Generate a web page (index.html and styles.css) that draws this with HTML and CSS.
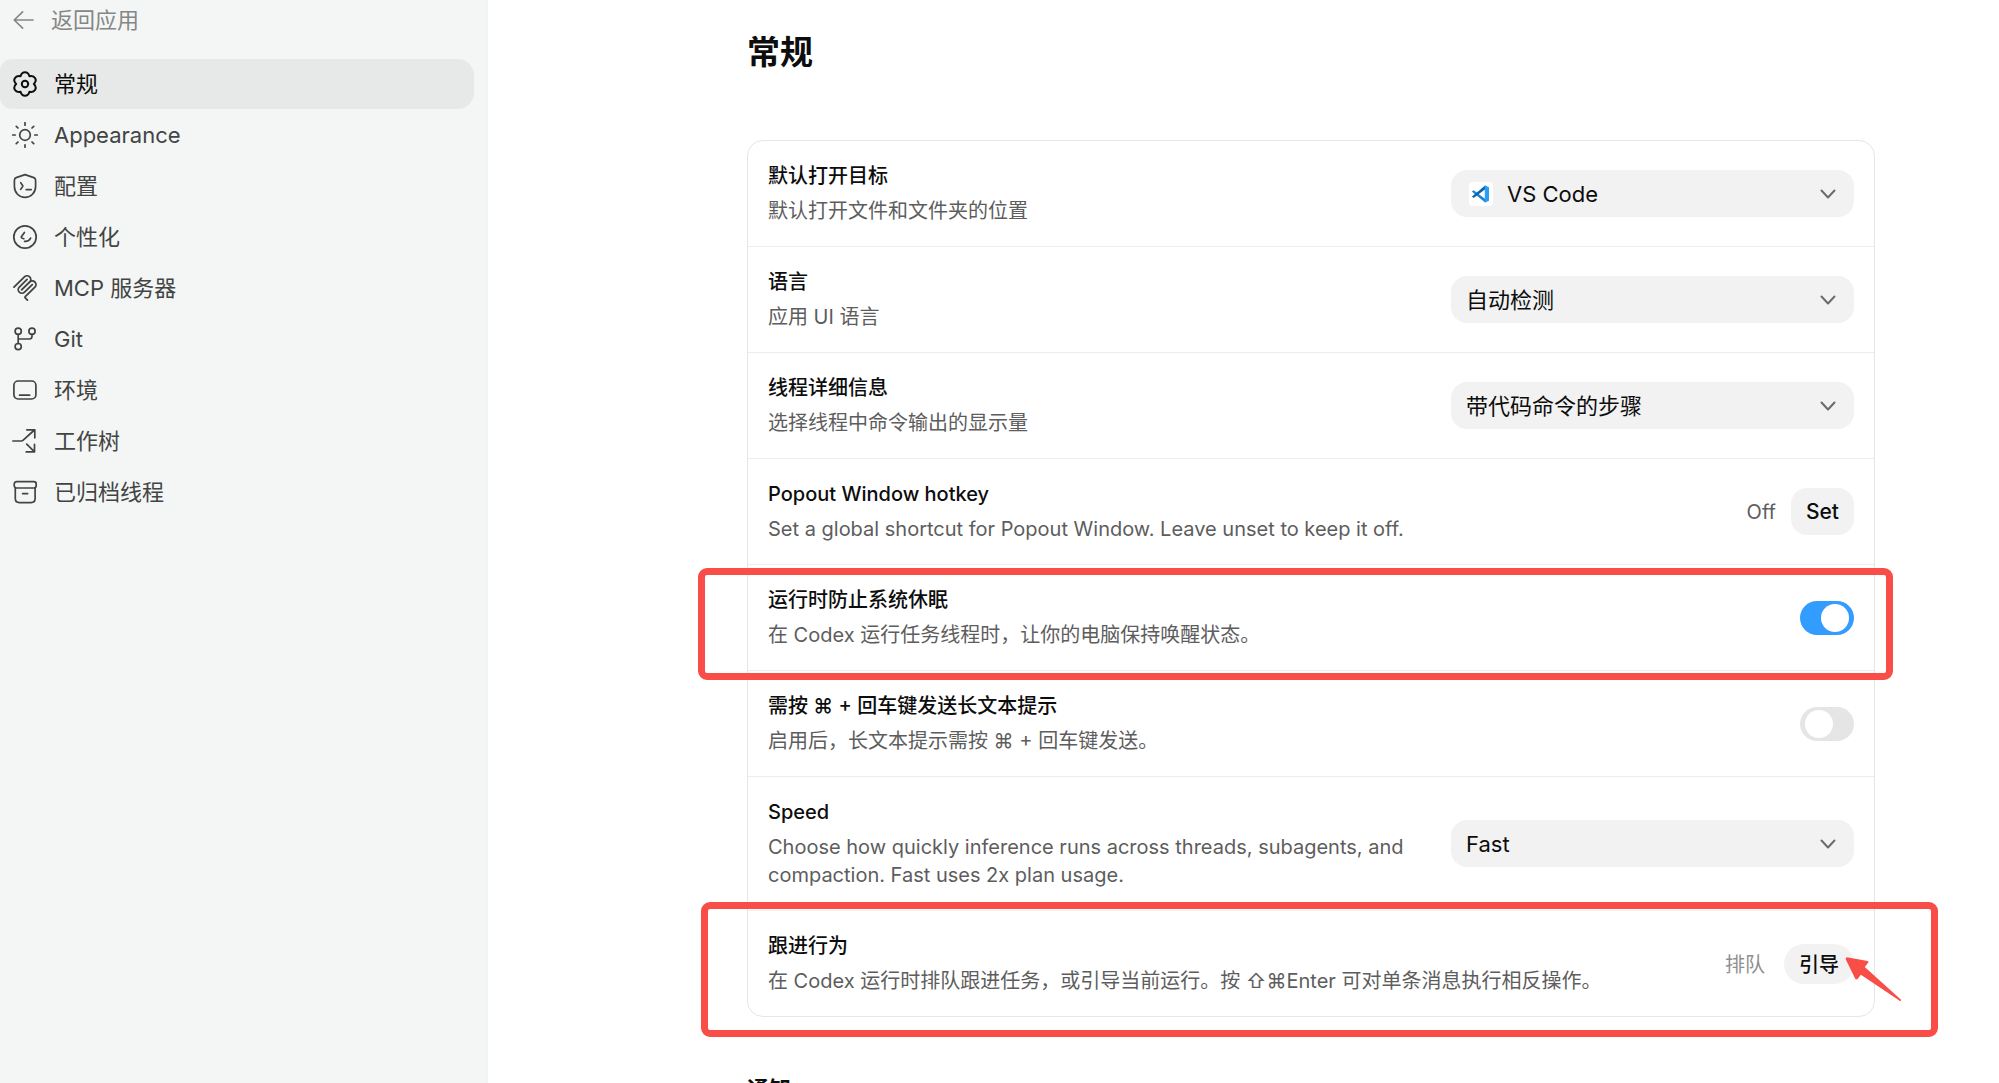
FILE: index.html
```html
<!DOCTYPE html>
<html lang="zh-CN">
<head>
<meta charset="utf-8">
<title>常规</title>
<link rel="stylesheet" href="styles.css">
</head>
<body>
<div class="app">
  <nav class="sidebar">
    <a class="back" href="#">
      <svg class="icon" viewBox="0 0 26 26"><path d="M21 13H2.5M10.6 4.8L2.2 13l8.4 8.2"/></svg>
      <span>返回应用</span>
    </a>
    <a class="nav-item active" href="#">
      <svg class="icon bold" viewBox="0 0 26 26"><path d="M21.9 13C25.8 9.100 22.8 3.900 17.450 5.300 16-.060 10-.060 8.550 5.300 3.200 3.900.200 9.100 4.100 13 .200 16.900 3.200 22.100 8.550 20.700 10 26.060 16 26.060 17.450 20.700 22.800 22.100 25.800 16.900 21.900 13Z"/><circle cx="13" cy="13" r="3.2"/></svg>
      <span>常规</span>
    </a>
    <a class="nav-item" href="#">
      <svg class="icon" viewBox="0 0 26 26"><circle cx="13" cy="13" r="5.3"/><path d="M13 .7v2.5M13 22.8v2.5M.7 13h2.5M22.8 13h2.5M4.3 4.3L6 6M20 20l1.7 1.7M4.3 21.7L6 20M20 6l1.7-1.7"/></svg>
      <span>Appearance</span>
    </a>
    <a class="nav-item" href="#">
      <svg class="icon" viewBox="0 0 26 26"><path d="M13 1.6L21.8 4.6Q23.6 5.3 23.6 7.2V13.6C23.6 19.6 19 24.4 13 24.4S2.4 19.6 2.4 13.6V7.2Q2.4 5.3 4.2 4.6ZM8.7 9.6L10.9 13l-2.2 3.4M14.2 16.6h5"/></svg>
      <span>配置</span>
    </a>
    <a class="nav-item" href="#">
      <svg class="icon" viewBox="0 0 26 26"><circle cx="13" cy="13" r="11.2"/><path d="M12.4 8.500L9.400 12.700q-.5 1.300 2.400 2.100M12.600 17.400c2.800.3 4.800-.900 6-3.300"/></svg>
      <span>个性化</span>
    </a>
    <a class="nav-item" href="#">
      <svg class="icon solid" viewBox="0 0 24 24"><path d="M15.688 2.343a2.588 2.588 0 00-3.61 0l-9.626 9.44a.863.863 0 01-1.203 0 .823.823 0 010-1.18l9.626-9.44a4.313 4.313 0 016.016 0 4.116 4.116 0 011.204 3.54 4.3 4.3 0 013.609 1.18l.05.05a4.115 4.115 0 010 5.9l-8.706 8.537a.274.274 0 000 .393l1.788 1.754a.823.823 0 010 1.18.863.863 0 01-1.203 0l-1.788-1.753a1.92 1.92 0 010-2.754l8.706-8.538a2.47 2.47 0 000-3.54l-.05-.049a2.588 2.588 0 00-3.607-.003l-7.172 7.034-.002.002-.098.097a.863.863 0 01-1.204 0 .823.823 0 010-1.18l7.273-7.133a2.47 2.47 0 00-.003-3.537z"/><path d="M14.485 4.703a.823.823 0 000-1.18.863.863 0 00-1.204 0l-7.119 6.982a4.115 4.115 0 000 5.9 4.314 4.314 0 006.016 0l7.12-6.982a.823.823 0 000-1.18.863.863 0 00-1.204 0l-7.119 6.982a2.588 2.588 0 01-3.61 0 2.47 2.47 0 010-3.54l7.12-6.982z"/></svg>
      <span>MCP 服务器</span>
    </a>
    <a class="nav-item" href="#">
      <svg class="icon" viewBox="0 0 26 26"><circle cx="6.2" cy="5.2" r="3.1"/><circle cx="20" cy="5.2" r="3.1"/><circle cx="6.2" cy="20.6" r="3.1"/><path d="M6.2 8.3v9.2M20 8.3v2q0 2.7-2.7 2.7H6.2"/></svg>
      <span>Git</span>
    </a>
    <a class="nav-item" href="#">
      <svg class="icon" viewBox="0 0 26 26"><rect x="1.9" y="4" width="22" height="18" rx="4.2"/><path d="M7.6 18.2h10"/></svg>
      <span>环境</span>
    </a>
    <a class="nav-item" href="#">
      <svg class="icon" viewBox="0 0 26 26"><path d="M.8 13h8.4q1.2 0 2-.8L22.4 2M14.8 1.8h8v8M14.7 16.2l7.6 7.5M14.2 23.9h8.3v-7.6"/></svg>
      <span>工作树</span>
    </a>
    <a class="nav-item" href="#">
      <svg class="icon" viewBox="0 0 26 26"><rect x="2.2" y="2.6" width="22" height="6.4" rx="2.4"/><path d="M3.3 9v10.6q0 4 4 4h11.8q4 0 4-4V9M10.6 14.6h5"/></svg>
      <span>已归档线程</span>
    </a>
  </nav>

  <main class="main">
    <h1>常规</h1>
    <section class="card">
      <div class="row">
        <div class="copy">
          <label class="title" for="target">默认打开目标</label>
          <p class="desc">默认打开文件和文件夹的位置</p>
        </div>
        <div class="picker with-logo">
          <svg class="logo" viewBox="0 0 24 24"><rect width="24" height="24" rx="4" fill="#fff"/><path d="M3 9.600l1.600-1.300L16.200 17v3.600L3 9.800Z" fill="#1a82d2"/><path d="M3 14.600L16.200 3.400V7.300L4.600 15.900Z" fill="#0b63ab"/><path d="M15.800 3.200L20 5.200V18.800L15.800 20.800Z" fill="#2a9df4"/></svg>
          <select id="target"><option>VS Code</option></select>
          <svg class="chevron" viewBox="0 0 16 16"><path d="M1.5 4.5L8 11.5l6.500-7"/></svg>
        </div>
      </div>
      <div class="row">
        <div class="copy">
          <label class="title" for="language">语言</label>
          <p class="desc">应用 UI 语言</p>
        </div>
        <div class="picker">
          <select id="language"><option>自动检测</option></select>
          <svg class="chevron" viewBox="0 0 16 16"><path d="M1.500 4.500L8 11.500l6.500-7"/></svg>
        </div>
      </div>
      <div class="row">
        <div class="copy">
          <label class="title" for="detail">线程详细信息</label>
          <p class="desc">选择线程中命令输出的显示量</p>
        </div>
        <div class="picker">
          <select id="detail"><option>带代码命令的步骤</option></select>
          <svg class="chevron" viewBox="0 0 16 16"><path d="M1.500 4.500L8 11.500l6.500-7"/></svg>
        </div>
      </div>
      <div class="row">
        <div class="copy">
          <h2 class="title">Popout Window hotkey</h2>
          <p class="desc">Set a global shortcut for Popout Window. Leave unset to keep it off.</p>
        </div>
        <div class="hotkey">
          <span class="desc">Off</span>
          <button class="set" type="button">Set</button>
        </div>
      </div>
      <div class="row marked">
        <div class="copy">
          <label class="title" for="awake">运行时防止系统休眠</label>
          <p class="desc">在 Codex 运行任务线程时，让你的电脑保持唤醒状态。</p>
        </div>
        <input class="toggle" id="awake" type="checkbox" checked>
        <div class="mark mark-awake"></div>
      </div>
      <div class="row">
        <div class="copy">
          <label class="title" for="enter">需按 ⌘ + 回车键发送长文本提示</label>
          <p class="desc">启用后，长文本提示需按 ⌘ + 回车键发送。</p>
        </div>
        <input class="toggle" id="enter" type="checkbox">
      </div>
      <div class="row">
        <div class="copy">
          <label class="title" for="speed">Speed</label>
          <p class="desc">Choose how quickly inference runs across threads, subagents, and compaction. Fast uses 2x plan usage.</p>
        </div>
        <div class="picker">
          <select id="speed"><option>Fast</option></select>
          <svg class="chevron" viewBox="0 0 16 16"><path d="M1.500 4.500L8 11.500l6.500-7"/></svg>
        </div>
      </div>
      <div class="row marked">
        <div class="copy">
          <h2 class="title">跟进行为</h2>
          <p class="desc">在 Codex 运行时排队跟进任务，或引导当前运行。按 ⇧⌘Enter 可对单条消息执行相反操作。</p>
        </div>
        <div class="segments">
          <button type="button">排队</button>
          <button class="on" type="button">引导</button>
        </div>
        <div class="mark mark-follow"></div>
        <svg class="pointer" viewBox="0 0 60 48"><path d="M3 2L24.500 6q1.500.5.5 1.800L21.500 12 59 46q.3 1.500-1 1.200L17.500 20l-3.500 4.500q-1.800 1.200-2.500-.5L2 4.500q-.8-2.300 1-2.500Z"/></svg>
      </div>
    </section>
    <h2 class="section-title">通知</h2>
  </main>
</div>
</body>
</html>
```
FILE: styles.css
```css
* { box-sizing: border-box; }

body {
  margin: 0;
  background: #fff;
  color: #0d0d0d;
  font-family: Inter, "Noto Sans CJK SC", "DejaVu Sans", sans-serif;
  font-size: 20px;
  line-height: 28px;
}

h1, h2, p { margin: 0; }

button, select {
  border: 0;
  font-family: inherit;
  color: inherit;
}

.app {
  display: flex;
  height: 100vh;
  overflow: hidden;
}

.sidebar {
  flex: none;
  display: flex;
  flex-direction: column;
  gap: 1px;
  width: 488px;
  padding-right: 11px;
  background: #f4f6f5;
  border-right: 3px solid #f2f4f3;
  font-size: 22px;
}

.back, .nav-item {
  display: flex;
  align-items: center;
  padding-left: 12px;
  color: #424443;
  text-decoration: none;
}

.back {
  gap: 13px;
  height: 40px;
  margin-bottom: 18px;
  color: #858786;
}

.nav-item {
  gap: 16px;
  height: 50px;
}

.nav-item.active {
  background: #e7e9e8;
  border-radius: 12px 16px 16px 12px;
  color: #0d0d0d;
}

.icon {
  flex: none;
  width: 26px;
  height: 26px;
  fill: none;
  stroke: currentColor;
  stroke-width: 1.7;
  stroke-linecap: round;
  stroke-linejoin: round;
}

.icon.bold { stroke-width: 2; }

.icon.solid {
  fill: currentColor;
  stroke: none;
}

.main {
  flex: 1;
  min-width: 0;
  padding: 30px 124px 0 259px;
}

h1 {
  font-size: 33px;
  line-height: 44px;
  font-weight: 600;
}

.card {
  margin-top: 66px;
  border: 1px solid #e6e6e6;
  border-radius: 16px;
}

.row {
  display: flex;
  align-items: center;
  justify-content: space-between;
  gap: 40px;
  padding: 21px 20px;
}

.row + .row { border-top: 1px solid #ededed; }

.marked { position: relative; }

.copy {
  display: flex;
  flex-direction: column;
  gap: 7px;
}

.title {
  font-size: 20px;
  line-height: 28px;
  font-weight: 500;
}

.desc { color: #5d5d5d; }

.picker {
  flex: none;
  position: relative;
  width: 403px;
}

.picker select {
  display: block;
  width: 100%;
  height: 47px;
  padding: 0 48px 0 15px;
  appearance: none;
  background: #f2f2f2;
  border-radius: 16px;
  font-size: 22px;
}

.with-logo select { padding-left: 56px; }

.logo {
  position: absolute;
  left: 18px;
  top: 12px;
  width: 24px;
  height: 24px;
}

.chevron {
  position: absolute;
  right: 18px;
  top: 16px;
  width: 16px;
  height: 16px;
  fill: none;
  stroke: #6b6b6b;
  stroke-width: 2;
  stroke-linecap: round;
  stroke-linejoin: round;
}

.hotkey {
  display: flex;
  align-items: center;
  gap: 15px;
}

.set {
  height: 47px;
  padding: 0 15px;
  background: #f2f2f2;
  border-radius: 16px;
  font-size: 21px;
  font-weight: 500;
}

.toggle {
  flex: none;
  width: 54px;
  height: 34px;
  margin: 0;
  padding: 3px 5px;
  appearance: none;
  background: #e5e5e5;
  border-radius: 17px;
}

.toggle::before {
  content: "";
  display: block;
  width: 28px;
  height: 28px;
  border-radius: 50%;
  background: #fff;
}

.toggle:checked { background: #339cff; }

.toggle:checked::before { margin-left: auto; }

.segments {
  flex: none;
  display: flex;
  gap: 4px;
}

.segments button {
  height: 40px;
  padding: 0 15px;
  background: none;
  border-radius: 20px;
  color: #8f8f8f;
  font-size: 20px;
}

.segments .on {
  background: #f2f2f2;
  color: #0d0d0d;
  font-weight: 500;
}

.mark {
  position: absolute;
  border: 7px solid #f94d48;
  border-radius: 9px;
  pointer-events: none;
}

.mark-awake { inset: 3px -19px -10px -50px; }

.mark-follow { inset: -9px -64px -21px -47px; }

.pointer {
  position: absolute;
  top: 44px;
  right: -28px;
  width: 58px;
  height: 47px;
  fill: #f94d48;
}

.section-title {
  margin-top: 56px;
  font-size: 22px;
  line-height: 32px;
  font-weight: 600;
}
```
